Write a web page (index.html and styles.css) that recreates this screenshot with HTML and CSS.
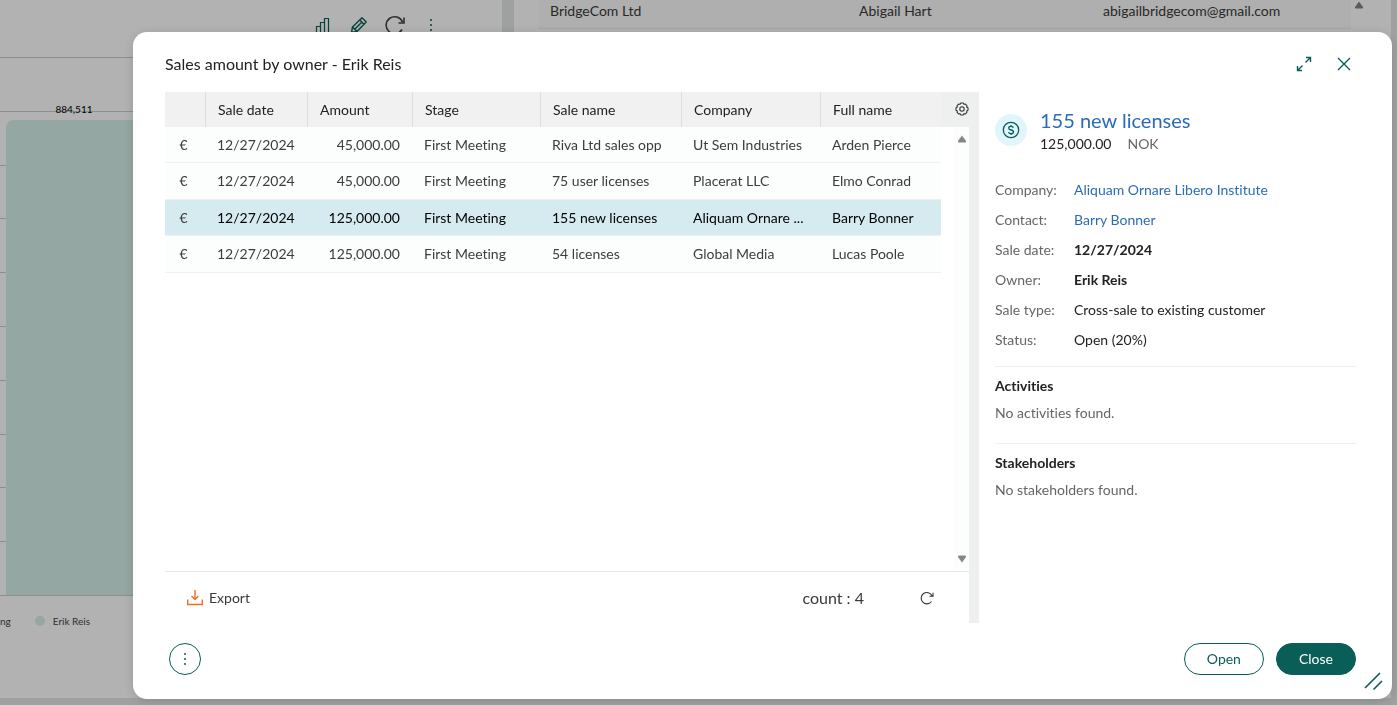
FILE: index.html
```html
<!DOCTYPE html>
<html lang="en">
<head>
<meta charset="utf-8">
<title>Sales amount by owner - Erik Reis</title>
<link rel="stylesheet" href="styles.css">
</head>
<body>
<div class="dashboard">
  <section class="panel chart-panel">
    <div class="chart-tools">
      <button class="icon-btn" aria-label="Chart type"><svg width="16" height="16" viewBox="0 0 16 16" fill="none" stroke="#0a5e58" stroke-width="1.2"><path d="M1.500 15.500V9.500H5.500V15.500M5.500 9.500V5.500H9.500V15.500M9.500 5.500V1.500H13.500V15.500M1 15.500H14"/></svg></button>
      <button class="icon-btn" aria-label="Edit"><svg width="18" height="18" viewBox="0 0 18 18" fill="none" stroke="#0a5e58" stroke-width="1.4" stroke-linejoin="round"><path d="M1.500 16.500l1-5.500L12 1.800l4.200 4.200L7 15.500zM9.800 4l4.200 4.200M2.500 11l4.500 4.500M4.700 13.300L12 6"/></svg></button>
      <button class="icon-btn" aria-label="Refresh"><svg width="22" height="20" viewBox="0 0 22 20" fill="none" stroke="#444" stroke-width="1.6"><path d="M18 14.500a8.500 8.500 0 1 1 .5-7.500M20 2.500V8h-5.500"/></svg></button>
      <button class="icon-btn" aria-label="More"><svg width="4" height="16" viewBox="0 0 4 16" fill="#0a5e58"><circle cx="2" cy="3" r="1"/><circle cx="2" cy="8" r="1"/><circle cx="2" cy="13" r="1"/></svg></button>
    </div>
    <div class="plot">
      <div class="gridlines"><i></i><i></i><i></i><i></i><i></i><i></i><i></i><i></i><i></i><i></i></div>
      <div class="bar-column"><span class="bar-value">884,511</span><div class="bar"></div></div>
    </div>
    <div class="legend"><span>ng</span><span class="legend-dot"></span><span>Erik Reis</span></div>
  </section>
  <section class="panel contact-panel">
    <div class="contact-row"><span>BridgeCom Ltd</span><span>Abigail Hart</span><span>abigailbridgecom@gmail.com</span></div>
    <div class="contact-scroll"><svg width="10" height="8" viewBox="0 0 10 8"><path d="M5 .500L9 6Q9.500 7.500 8 7.500H2Q.500 7.500 1 6z" fill="#858585"/></svg></div>
  </section>
</div>
<div class="scrim"></div>

<div class="dialog" role="dialog" aria-labelledby="dialog-title">
  <header class="dialog-head">
    <h1 id="dialog-title">Sales amount by owner - Erik Reis</h1>
    <button class="icon-btn" aria-label="Expand"><svg width="16" height="16" viewBox="0 0 16 16" fill="none" stroke="#0a5e58" stroke-width="1.400"><path d="M9.500 6.500L14.500 1.500M10 1.500H14.500V6M6.500 9.500L1.500 14.500M1.500 10V14.500H6"/></svg></button>
    <button class="icon-btn" aria-label="Close dialog"><svg width="16" height="16" viewBox="0 0 16 16" fill="none" stroke="#0a5e58" stroke-width="1.400"><path d="M2 2L14 14M14 2L2 14"/></svg></button>
  </header>

  <div class="content">
    <section class="list">
      <div class="list-body">
        <div class="table-area">
          <table>
            <colgroup><col class="c-icon"><col class="c-date"><col class="c-amount"><col class="c-stage"><col class="c-name"><col class="c-company"><col class="c-full"></colgroup>
            <thead>
              <tr><th></th><th>Sale date</th><th>Amount</th><th>Stage</th><th>Sale name</th><th>Company</th><th>Full name</th></tr>
            </thead>
            <tbody>
              <tr><td>€</td><td>12/27/2024</td><td>45,000.00</td><td>First Meeting</td><td>Riva Ltd sales opp</td><td>Ut Sem Industries</td><td>Arden Pierce</td></tr>
              <tr><td>€</td><td>12/27/2024</td><td>45,000.00</td><td>First Meeting</td><td>75 user licenses</td><td>Placerat LLC</td><td>Elmo Conrad</td></tr>
              <tr class="selected"><td>€</td><td>12/27/2024</td><td>125,000.00</td><td>First Meeting</td><td>155 new licenses</td><td>Aliquam Ornare ...</td><td>Barry Bonner</td></tr>
              <tr><td>€</td><td>12/27/2024</td><td>125,000.00</td><td>First Meeting</td><td>54 licenses</td><td>Global Media</td><td>Lucas Poole</td></tr>
            </tbody>
          </table>
        </div>
        <div class="list-side">
          <button class="icon-btn gear" aria-label="Columns"><svg width="14" height="14" viewBox="0 0 14 14" fill="none" stroke="#333" stroke-width="1.100"><path stroke-linejoin="round" d="M5.800 1h2.400l.7 1.300 1.500-.2 1.500 1.500-.2 1.500 1.300.7v2.400l-1.300.7.2 1.500-1.500 1.500-1.500-.2-.7 1.300H5.800l-.7-1.300-1.500.2-1.500-1.500.2-1.500L1 8.200V5.800l1.300-.7-.2-1.500 1.500-1.500 1.500.2z"/><circle cx="7" cy="7" r="2.200"/></svg></button>
          <div class="track">
            <svg width="10" height="8" viewBox="0 0 10 8"><path d="M5 .500L9 6Q9.500 7.500 8 7.500H2Q.500 7.500 1 6z" fill="#858585"/></svg>
            <svg width="10" height="8" viewBox="0 0 10 8"><path d="M5 7.500L9 2Q9.500 .500 8 .500H2Q.500 .500 1 2z" fill="#858585"/></svg>
          </div>
        </div>
      </div>
      <div class="list-foot">
        <button class="export"><svg width="16" height="16" viewBox="0 0 16 16" fill="none" stroke="#f26b21" stroke-width="1.400"><path d="M.700 9.500V14.500H15.300V9.500M8 0V9.500M4.500 6L8 9.500L11.500 6"/></svg>Export</button>
        <span class="count">count : 4</span>
        <button class="icon-btn" aria-label="Reload"><svg width="14" height="14" viewBox="0 0 14 14" fill="none" stroke="#333" stroke-width="1.100"><path d="M11.500 10.500A5.700 5.700 0 1 1 12 4.700M13 1.800V5.300H9.500"/></svg></button>
      </div>
    </section>
    <div class="splitter"></div>
    <aside class="detail">
      <div class="detail-head">
        <span class="badge"><svg width="18" height="18" viewBox="0 0 18 18" fill="none" stroke="#0a5e58" stroke-width="1.300"><circle cx="9" cy="9" r="7.700"/><path d="M11.400 6.800Q11 5.400 9 5.400 6.700 5.400 6.700 7.100 6.700 8.600 9 9 11.500 9.400 11.500 11 11.500 12.700 9 12.700 6.800 12.700 6.500 11.200M9 4V5.400M9 12.700V14.100"/></svg></span>
        <div>
          <a class="detail-title" href="#">155 new licenses</a>
          <div class="detail-amount"><span>125,000.00</span><span class="muted">NOK</span></div>
        </div>
      </div>
      <dl>
        <dt>Company:</dt><dd><a href="#">Aliquam Ornare Libero Institute</a></dd>
        <dt>Contact:</dt><dd><a href="#">Barry Bonner</a></dd>
        <dt>Sale date:</dt><dd class="strong">12/27/2024</dd>
        <dt>Owner:</dt><dd class="strong">Erik Reis</dd>
        <dt>Sale type:</dt><dd>Cross-sale to existing customer</dd>
        <dt>Status:</dt><dd>Open (20%)</dd>
      </dl>
      <section class="block"><h2>Activities</h2><p>No activities found.</p></section>
      <section class="block"><h2>Stakeholders</h2><p>No stakeholders found.</p></section>
    </aside>
  </div>

  <footer class="dialog-foot">
    <button class="round" aria-label="More actions"><svg width="4" height="16" viewBox="0 0 4 16" fill="#0a5e58"><circle cx="2" cy="3" r="1"/><circle cx="2" cy="8" r="1"/><circle cx="2" cy="13" r="1"/></svg></button>
    <button class="pill">Open</button>
    <button class="pill primary">Close</button>
  </footer>
  <svg class="resize" width="20" height="20" viewBox="0 0 20 20" stroke="#0a5e58" stroke-width="1.600"><path d="M2 17L17 2M10.500 18.500L19 10"/></svg>
</div>
</body>
</html>
```
FILE: styles.css
```css
* { box-sizing: border-box; }
body {
  margin: 0;
  font-family: Lato, "Open Sans", sans-serif;
  font-size: 14px;
  font-variant-ligatures: none;
  line-height: 20px;
  color: #222;
  overflow: hidden;
}
button { font: inherit; color: inherit; cursor: pointer; }
svg { display: block; }
a { color: #2b6cb8; text-decoration: none; }
h1, h2, p, dl, dd { margin: 0; }
.icon-btn { display: flex; padding: 0; border: 0; background: none; }

/* Dashboard behind the dialog */
.dashboard {
  display: grid;
  grid-template-columns: 502fr 877fr;
  gap: 12px;
  height: 100vh;
  padding: 0 6px 7px 0;
  background: #e4e7e6;
}
.panel { background: #fff; }
.chart-panel { display: flex; flex-direction: column; }
.chart-tools {
  display: flex;
  justify-content: flex-end;
  align-items: center;
  height: 57px;
  padding: 0 53px 8px 0;
}
.chart-tools .icon-btn { justify-content: center; width: 36px; }
.plot { display: grid; flex: 1; border-bottom: 1px solid #c4ceca; }
.gridlines, .bar-column { grid-area: 1 / 1; }
.gridlines { display: flex; flex-direction: column; }
.gridlines i { flex: 1; border-top: 1px solid #c4ceca; }
.bar-column {
  display: flex;
  flex-direction: column;
  width: 136px;
  margin-left: 6px;
  padding-top: 42px;
  font-size: 10px;
  text-align: center;
}
.bar-value { color: #000; }
.bar { flex: 1; margin-top: 1px; border-radius: 8px 8px 0 0; background: #d6f0e9; }
.legend {
  display: flex;
  align-items: center;
  gap: 8px;
  height: 102px;
  padding-bottom: 52px;
  font-size: 10px;
  color: #444;
}
.legend-dot { width: 10px; height: 10px; margin-left: 16px; border-radius: 50%; background: #d6f0e9; }
.contact-panel { display: flex; align-items: flex-start; padding: 0 24px; }
.contact-row {
  display: grid;
  grid-template-columns: 309fr 244fr 248fr;
  flex: 1;
  height: 29px;
  padding: 1px 0 0 12px;
  border-bottom: 1px solid #eee;
  background: #fbfbfb;
  color: #3a3a3a;
}
.contact-scroll { width: 16px; padding: 1px 3px; }
.scrim { position: fixed; inset: 0; background: rgba(0, 0, 0, .3); }

/* Dialog */
.dialog {
  position: fixed;
  inset: 32px 5px 6px 133px;
  display: flex;
  flex-direction: column;
  padding: 0 36px 24px 32px;
  border-radius: 14px;
  background: #fff;
  box-shadow: 0 2px 12px rgba(0, 0, 0, .15);
}
.dialog-head { display: flex; align-items: center; gap: 24px; height: 60px; padding: 4px 4px 0 0; }
.dialog-head h1 { flex: 1; font-size: 16px; font-weight: 400; line-height: 24px; }
.content { display: grid; grid-template-columns: 804fr 10px 377fr; flex: 1; min-height: 0; }
.list { display: flex; flex-direction: column; min-width: 0; }
.list-body { display: flex; flex: 1; border-bottom: 1px solid #e4e7e7; }
.table-area { flex: 1; min-width: 0; }
table { width: 100%; table-layout: fixed; border-collapse: separate; border-spacing: 0; }
.c-icon { width: 41px; }
.c-date { width: 102px; }
.c-amount { width: 105px; }
.c-stage { width: 128px; }
.c-name { width: 141px; }
.c-company { width: 139px; }
th {
  height: 35px;
  padding: 0 12px;
  border-right: 1px solid #dcdfdf;
  background: #f1f1f1;
  font-weight: 400;
  text-align: left;
}
th:last-child { border-right: 0; }
td {
  height: 36px;
  padding: 0 12px 0 11px;
  border-bottom: 1px solid #eff1f1;
  background: #fcfefd;
  color: #3c3c3c;
  white-space: nowrap;
}
tr:nth-child(even) td { height: 37px; }
td:first-child { padding: 0 4px 0 0; text-align: center; }
td:nth-child(3) { padding-right: 13px; text-align: right; }
.selected td { background: #d6ebf0; color: #000; }
.selected td:first-child { color: #3c3c3c; }
.list-side { display: flex; flex-direction: column; width: 28px; }
.gear { justify-content: center; align-items: center; height: 35px; padding: 0 0 2px 13px; background: #eef0f0; }
.track {
  display: flex;
  flex-direction: column;
  justify-content: space-between;
  align-items: center;
  flex: 1;
  margin-left: 13px;
  padding: 8px 0;
  background: #fcfefd;
}
.list-foot { display: flex; align-items: center; height: 51px; padding: 0 35px 0 22px; color: #3a3a3a; }
.export { display: flex; align-items: center; gap: 6px; margin-right: auto; padding: 0; border: 0; background: none; }
.count { margin-right: 56px; font-size: 16px; }
.splitter { background: #eef0f0; }
.detail { min-width: 0; padding: 16px 0 0 16px; }
.detail-head { display: flex; gap: 13px; }
.badge {
  display: flex;
  align-items: center;
  justify-content: center;
  width: 32px;
  height: 32px;
  margin-top: 6px;
  border-radius: 50%;
  background: #e1f6fc;
}
.detail-title { display: block; padding-bottom: 2px; font-size: 20px; line-height: 24px; }
.detail-amount { display: flex; gap: 16px; }
.muted, dt, .block p { color: #666; }
dl { display: grid; grid-template-columns: 79px 1fr; row-gap: 10px; padding: 26px 0 16px; }
.strong { font-weight: 700; }
.block { padding: 9px 0 20px; border-top: 1px solid #ebf0f2; }
.block h2 { font-size: 14px; font-weight: 700; line-height: 20px; }
.block p { margin-top: 7px; }
.dialog-foot { display: flex; align-items: center; gap: 12px; padding: 20px 0 0 4px; }
.round {
  display: flex;
  align-items: center;
  justify-content: center;
  width: 32px;
  height: 32px;
  margin-right: auto;
  padding: 0;
  border: 1px solid #0a5e58;
  border-radius: 50%;
  background: #fff;
}
.pill {
  height: 32px;
  padding: 0 22px;
  border: 1px solid #0a5e58;
  border-radius: 16px;
  background: #fff;
  color: #0a5e58;
}
.primary { background: #0a5e58; color: #fff; }
.resize { position: absolute; right: 9px; bottom: 8px; }
```
